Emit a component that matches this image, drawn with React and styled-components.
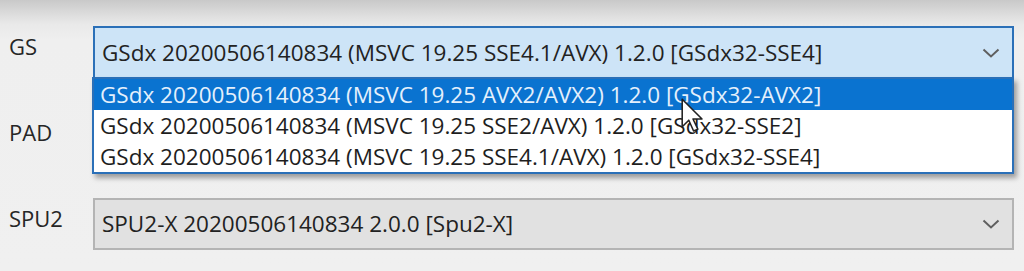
import React from "react";
import styled, { createGlobalStyle } from "styled-components";

const Global = createGlobalStyle`
  html, body { margin: 0; padding: 0; }
  body {
    width: 1024px;
    height: 271px;
    overflow: hidden;
    background: linear-gradient(to bottom, #c9c9c9 0px, #dcdcdc 14px, #e9e9e9 24px, #efefef 40px, #f0f0f0 100%);
    font-family: "Open Sans", "Noto Sans", sans-serif;
  }
`;

const Form = styled.div`
  display: grid;
  grid-template-columns: 84px 921px;
  grid-auto-rows: 52px;
  row-gap: 34px;
  padding: 26px 0 0 9px;
`;

const Label = styled.div`
  display: flex;
  align-items: center;
  padding-bottom: 12px;
  font-size: 22px;
  color: #262626;
`;

const ComboWrap = styled.div`
  position: relative;
`;

const Combo = styled.div`
  box-sizing: border-box;
  height: 52px;
  display: flex;
  align-items: center;
  justify-content: space-between;
  padding: 0 12px 0 7px;
  font-size: 22.5px;
  color: #222;
  background: ${(p) => (p.$active ? "#cde4f7" : "#e1e1e1")};
  border: ${(p) => (p.$active ? "2px solid #2b70b8" : "2px solid #b4b4b4")};
  border-bottom-width: ${(p) => (p.$active ? "0" : "2px")};
`;

const ComboText = styled.span`
  white-space: nowrap;
  margin-bottom: 2px;
`;

const Chevron = () => (
  <svg width="18" height="10" viewBox="0 0 18 10" fill="none">
    <path d="M1.5 1.5 L9 8.5 L16.5 1.5" stroke="#5f5f5f" strokeWidth="2" />
  </svg>
);

const List = styled.div`
  position: absolute;
  top: 51px;
  left: -1px;
  right: 0;
  box-sizing: border-box;
  border: 2px solid #2b70b8;
  background: #fff;
  box-shadow: 3px 4px 5px rgba(0, 0, 0, 0.35);
  z-index: 2;
`;

const Option = styled.div`
  height: 31px;
  display: flex;
  align-items: center;
  padding-left: 6px;
  font-size: 22.5px;
  white-space: nowrap;
  color: ${(p) => (p.$selected ? "#e4f0fc" : "#1e1e1e")};
  background: ${(p) => (p.$selected ? "#0a73d0" : "#fff")};
`;

const Cursor = styled.svg`
  position: absolute;
  left: 587px;
  top: 19px;
  z-index: 3;
`;

const options = [
  "GSdx 20200506140834 (MSVC 19.25 AVX2/AVX2) 1.2.0 [GSdx32-AVX2]",
  "GSdx 20200506140834 (MSVC 19.25 SSE2/AVX) 1.2.0 [GSdx32-SSE2]",
  "GSdx 20200506140834 (MSVC 19.25 SSE4.1/AVX) 1.2.0 [GSdx32-SSE4]",
];

export default function App() {
  return (
    <>
      <Global />
      <Form>
        <Label>GS</Label>
        <ComboWrap>
          <Combo $active>
            <ComboText>GSdx 20200506140834 (MSVC 19.25 SSE4.1/AVX) 1.2.0 [GSdx32-SSE4]</ComboText>
            <Chevron />
          </Combo>
          <List>
            {options.map((o, i) => (
              <Option key={o} $selected={i === 0}>{o}</Option>
            ))}
            <Cursor width="24" height="36" viewBox="0 0 20 30">
              <path
                d="M1 1 L1 24 L6.5 18.5 L10.5 27.5 L14 26 L10 17.5 L17.5 17.5 Z"
                fill="#fff"
                stroke="#222"
                strokeWidth="1.3"
                strokeLinejoin="round"
              />
            </Cursor>
          </List>
        </ComboWrap>
        <Label>PAD</Label>
        <ComboWrap>
          <Combo $active={false}>
            <span />
            <Chevron />
          </Combo>
        </ComboWrap>
        <Label>SPU2</Label>
        <ComboWrap>
          <Combo $active={false}>
            <ComboText>SPU2-X 20200506140834 2.0.0 [Spu2-X]</ComboText>
            <Chevron />
          </Combo>
        </ComboWrap>
      </Form>
    </>
  );
}
